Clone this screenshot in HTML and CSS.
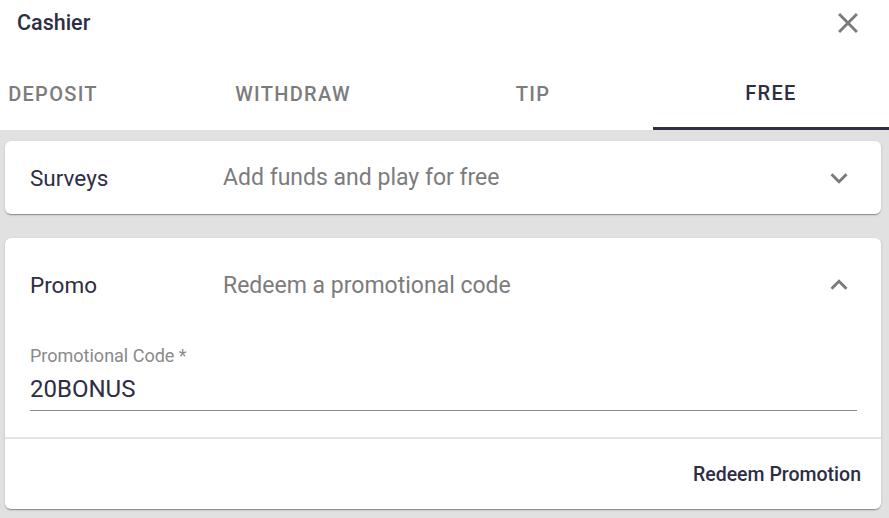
FILE: index.html
```html
<!DOCTYPE html>
<html lang="en">
<head>
<meta charset="utf-8">
<title>Cashier</title>
<link rel="stylesheet" href="styles.css">
</head>
<body>
<div class="dialog">
  <header class="header">
    <h1 class="title">Cashier</h1>
    <button class="close" aria-label="Close">
      <svg viewBox="0 0 24 24" width="34" height="34"><path d="M19 6.41L17.59 5 12 10.59 6.41 5 5 6.41 10.59 12 5 17.59 6.41 19 12 13.41 17.59 19 19 17.59 13.41 12z" fill="#7a7a7a"/></svg>
    </button>
  </header>
  <nav class="tabs">
    <div class="tabs-inner">
      <div class="tab">Deposit</div>
      <div class="tab">Withdraw</div>
      <div class="tab">Tip</div>
      <div class="tab tab-last active">Free</div>
    </div>
  </nav>
  <main class="content">
    <section class="card">
      <div class="summary summary-collapsed">
        <span class="heading">Surveys</span>
        <span class="secondary">Add funds and play for free</span>
        <svg class="chevron" viewBox="0 0 24 24" width="34" height="34"><path d="M16.59 8.59L12 13.17 7.41 8.59 6 10l6 6 6-6z" fill="#7a7a7a"/></svg>
      </div>
    </section>
    <section class="card card-expanded">
      <div class="summary summary-expanded">
        <span class="heading">Promo</span>
        <span class="secondary">Redeem a promotional code</span>
        <svg class="chevron" viewBox="0 0 24 24" width="34" height="34"><path d="M12 8l-6 6 1.41 1.41L12 10.83l4.59 4.58L18 14z" fill="#7a7a7a"/></svg>
      </div>
      <div class="details">
        <div class="field">
          <label class="field-label">Promotional Code *</label>
          <div class="field-input">20BONUS</div>
        </div>
      </div>
      <div class="actions">
        <button class="action-btn">Redeem Promotion</button>
      </div>
    </section>
  </main>
</div>
</body>
</html>
```

FILE: styles.css
```css
* { box-sizing: border-box; }
html, body { margin: 0; padding: 0; }
body {
  width: 889px;
  height: 518px;
  overflow: hidden;
  background: #e1e1e1;
  font-family: Roboto, "Liberation Sans", sans-serif;
  color: #2d2e45;
}
.dialog {
  display: flex;
  flex-direction: column;
  height: 518px;
}
.header {
  background: #fff;
  height: 60px;
  display: flex;
  align-items: flex-start;
  justify-content: space-between;
  padding: 0 24px 0 17px;
}
.title {
  margin: 9px 0 0;
  font-size: 21.5px;
  font-weight: 500;
  line-height: 27px;
  color: #2d2e45;
}
.close {
  margin-top: 6px;
  border: 0;
  padding: 0;
  background: none;
  width: 34px;
  height: 34px;
  display: block;
}
.close svg { display: block; }
.tabs {
  background: #fff;
  height: 70px;
  overflow: hidden;
  display: flex;
  justify-content: flex-end;
}
.tabs-inner {
  display: flex;
  flex-shrink: 0;
}
.tab {
  width: 240px;
  flex-shrink: 0;
  height: 70px;
  display: flex;
  align-items: center;
  justify-content: center;
  text-transform: uppercase;
  font-size: 20px;
  font-weight: 500;
  letter-spacing: 1.3px;
  color: #7c7c7c;
  padding-bottom: 2px;
}
.tab-last { width: 236px; }
.tab.active {
  color: #2d2e45;
  border-bottom: 3px solid #2e2f48;
  padding-top: 1px;
}
.content {
  flex: 1;
  padding: 11px 8px 0 5px;
  display: flex;
  flex-direction: column;
  gap: 24px;
}
.card {
  background: #fff;
  border-radius: 6px;
  box-shadow: 0 1px 1px rgba(0,0,0,0.14), 0 2px 1px -1px rgba(0,0,0,0.2), 0 1px 3px rgba(0,0,0,0.12);
}
.summary {
  display: flex;
  align-items: center;
  padding: 0 25px;
}
.summary-collapsed { height: 73px; }
.summary-expanded { height: 94px; }
.heading {
  width: 193px;
  flex-shrink: 0;
  font-size: 22.5px;
  color: #2d2e45;
}
.secondary {
  flex: 1;
  font-size: 23px;
  color: #7c7c7c;
}
.chevron { display: block; flex-shrink: 0; }
.details {
  padding: 13px 24px 26px 25px;
}
.field {
  border-bottom: 1px solid #8c8c8c;
  padding-bottom: 6px;
}
.field-label {
  display: block;
  font-size: 18px;
  line-height: 22px;
  color: #8a8a8a;
}
.field-input {
  margin-top: 7px;
  font-size: 24px;
  line-height: 30px;
  color: #2d2e45;
}
.actions {
  border-top: 2px solid #e4e4e4;
  height: 72px;
  display: flex;
  align-items: center;
  justify-content: flex-end;
  padding-right: 20px;
}
.action-btn {
  border: 0;
  background: none;
  padding: 0;
  font-family: Roboto, "Liberation Sans", sans-serif;
  font-size: 19.5px;
  font-weight: 500;
  color: #2d2e45;
}
```
